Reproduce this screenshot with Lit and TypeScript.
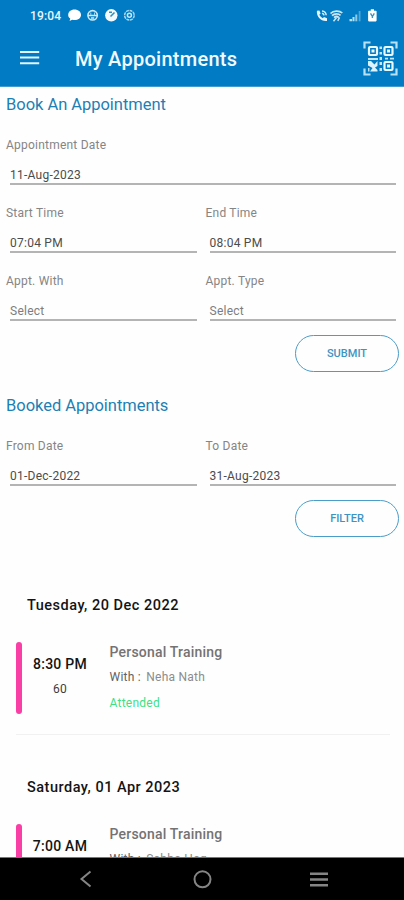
import { LitElement, html, css, svg } from "lit";
import { customElement, property } from "lit/decorators.js";

interface Appointment {
  date: string;
  time: string;
  minutes: string;
  title: string;
  trainer: string;
  status: string;
}

const APPOINTMENTS: Appointment[] = [
  { date: "Tuesday, 20 Dec 2022", time: "8:30 PM", minutes: "60", title: "Personal Training", trainer: "Neha Nath", status: "Attended" },
  { date: "Saturday, 01 Apr 2023", time: "7:00 AM", minutes: "", title: "Personal Training", trainer: "Sabba Haq", status: "" },
];

@customElement("status-bar")
class StatusBar extends LitElement {
  static styles = css`
    :host { display: flex; height: 31px; align-items: center; padding: 0 26px 0 30px; justify-content: space-between; box-sizing: border-box; color: #e9f6fc; }
    .time { font-size: 12px; font-weight: 500; letter-spacing: 0.15px; line-height: 16px; width: 38px; }
    .group { display: flex; align-items: center; }
    svg { display: block; }
  `;
  render() {
    return html`
      <div class="group">
        <span class="time">19:04</span>
        <svg width="70" height="16" viewBox="0 0 70 16">
          <path d="M6.500 1.500C10.200 1.500 13 3.800 13 6.900S10.200 12 6.500 12c-.8 0-1.600-.1-2.300-.3L1.600 13l.6-2.500C.8 9.500.2 8.300.2 6.900.2 3.800 2.800 1.500 6.500 1.500z" fill="#fff"/>
          <circle cx="24.600" cy="7.300" r="4.700" fill="none" stroke="#cdeafa" stroke-width="1.600"/>
          <path d="M20 7.500h9.200M23 10h3.200" stroke="#cdeafa" stroke-width="1.700"/>
          <path d="M22.800 4.500v2.500M26.500 4.500v2.500" stroke="#9fd2ec" stroke-width="1"/>
          <circle cx="43.300" cy="7.300" r="6.200" fill="#f4fbff"/>
          <path d="m42.500 8.600 4-4.200M41 4.300h3" stroke="#2f8fbb" stroke-width="1.500" fill="none"/>
          <circle cx="61.400" cy="7.300" r="4.800" fill="none" stroke="#a9d8ef" stroke-width="1.500" stroke-dasharray="3 .7"/>
          <circle cx="61.400" cy="7.300" r="2" fill="none" stroke="#c6e8f8" stroke-width="1.500"/>
        </svg>
      </div>
      <svg width="62" height="16" viewBox="0 0 62 16">
        <path d="M.9 2.700 3.400 2.400l1.200 3.100-1.300 1.300c.8 1.600 2 2.700 3.500 3.500L8 9.100l3 1.200v2.600C5.400 13.800.2 8.700.9 2.700z" fill="#e6f6fd"/>
        <path d="M6 3c2.300.2 4 1.800 4.200 4.200M6 5.200c1.100.2 1.900.9 2.100 2.100" fill="none" stroke="#d7effb" stroke-width="1.500"/>
        <path d="M14.500 5.500c3-3.200 9-3.200 11.800-.5M16 7.700c2.500-2.400 6.300-2.400 8.600-.3M18 9.600c1.500-1.300 3.500-1.300 4.800 0" fill="none" stroke="#c9e8f7" stroke-width="1.700"/>
        <path d="m20.500 9.500-3 3.700M23.500 9.300 21.800 12.800" stroke="#c9e8f7" stroke-width="1.500"/>
        <path d="M33.500 11h2.500v2.300h-2.500zM36.500 9h2v4.300h-2z" fill="#b8e0f3"/>
        <path d="M39.300 6.500h2v6.800h-2z" fill="#8ccbe8"/>
        <path d="M42.700 3h1.800v10.300h-1.800z" fill="#4fa9d6"/>
        <path d="M54.800 1.300H58v1.400h1.800c.5 0 .8.300.8.800v9.100c0 .5-.3.800-.8.800h-6.900c-.5 0-.8-.3-.8-.8V3.500c0-.5.300-.8.800-.8h1.900z" fill="#fff"/>
        <path d="M54.500 5.300 56.400 8.500l1.900-3.200M56.400 8v2" stroke="#3f92be" stroke-width="1.400" fill="none"/>
      </svg>
    `;
  }
}

@customElement("form-field")
class FormField extends LitElement {
  @property() label = "";
  @property() value = "";
  @property({ type: Boolean }) empty = false;
  static styles = css`
    :host { display: block; flex: 1; height: 68px; color: #4c4c4c; }
    .label { font-size: 12px; line-height: 16px; letter-spacing: 0.22px; color: #858585; }
    .value { margin: 14px 0 0 4px; height: 16px; font-size: 12px; line-height: 16px; letter-spacing: 0.25px; border-bottom: 2px solid #b4b4b4; }
    .empty { color: #7d7d7d; }
  `;
  render() {
    return html`<div class="label">${this.label}</div>
      <div class="value ${this.empty ? "empty" : ""}">${this.value}</div>`;
  }
}

@customElement("appointment-item")
class AppointmentItem extends LitElement {
  @property({ attribute: false }) item!: Appointment;
  static styles = css`
    :host { display: block; height: 182px; box-sizing: border-box; padding: 0 14px 0 16px; }
    .date { font-size: 14.500px; font-weight: 500; line-height: 20px; letter-spacing: 0.5px; color: #141414; margin-left: 11px; }
    .card { display: flex; height: 119px; box-sizing: border-box; padding-top: 26px; border-bottom: 1px solid #f1f1f1; }
    .bar { width: 6px; height: 72px; border-radius: 3px; background: #f93ea5; }
    .when { width: 76px; padding-top: 13px; text-align: center; }
    .time { font-size: 14px; font-weight: 500; line-height: 18px; letter-spacing: 0.25px; color: #141414; }
    .minutes { font-size: 12px; line-height: 16px; margin-top: 8px; letter-spacing: 0.2px; color: #3c3c3c; }
    .what { padding: 1px 0 0 11.500px; }
    .title { font-size: 14px; font-weight: 500; line-height: 18px; letter-spacing: 0.2px; color: #737373; }
    .with { font-size: 12px; line-height: 16px; margin-top: 8px; color: #8c8c8c; letter-spacing: 0.25px; }
    .key { color: #626262; margin-right: 2px; }
    .status { font-size: 12px; line-height: 16px; margin-top: 10px; color: #40df86; letter-spacing: 0.25px; }
  `;
  render() {
    const a = this.item;
    return html`
      <div class="date">${a.date}</div>
      <div class="card">
        <div class="bar"></div>
        <div class="when">
          <div class="time">${a.time}</div>
          <div class="minutes">${a.minutes}</div>
        </div>
        <div class="what">
          <div class="title">${a.title}</div>
          <div class="with"><span class="key">With :</span> ${a.trainer}</div>
          <div class="status">${a.status}</div>
        </div>
      </div>
    `;
  }
}

const finder = (x: number, y: number) => svg`
  <rect x=${x} y=${y} width="8" height="8" rx="1" fill="none" stroke="#eaf7fd" stroke-width="2.200"/>
  <rect x=${x + 2.5} y=${y + 2.5} width="3" height="3" fill="#eaf7fd"/>`;

@customElement("app-root")
class AppRoot extends LitElement {
  static styles = css`
    :host { display: flex; flex-direction: column; width: 404px; height: 900px; overflow: hidden; background: #fefefe; font-family: Roboto, "Liberation Sans", sans-serif; }
    .header { flex: none; height: 87px; box-sizing: border-box; background: #017bc3; border-bottom: 1px solid #3f9bd0; }
    .bar { display: flex; height: 54px; align-items: center; padding: 0 6px 0 20px; }
    .burger { width: 20px; }
    .title { flex: 1; margin: 2px 0 0 35px; font-size: 20px; font-weight: 500; line-height: 26px; color: #f1fafe; letter-spacing: 0.27px; }
    svg { display: block; }
    .body { flex: 1; min-height: 0; overflow: hidden; padding-top: 8px; }
    .section { padding: 0 5px 0 6px; }
    h2 { margin: 0 0 22px; font-size: 16.500px; line-height: 20px; font-weight: 400; letter-spacing: -0.03px; color: #1d80b4; }
    .row { display: flex; gap: 9px; padding-right: 3px; }
    .actions { display: flex; justify-content: flex-end; height: 61px; margin-top: -6px; }
    button { width: 104px; height: 37px; box-sizing: border-box; padding: 0; border: 1.500px solid #4b9dc9; border-radius: 19px; background: none; font: 500 11px/16px Roboto, sans-serif; color: #3d93c2; letter-spacing: 0; }
    .list { padding-top: 35px; }
    .nav { flex: none; height: 43px; box-sizing: border-box; background: #000; border-top: 1px solid #777; }
  `;
  render() {
    return html`
      <div class="header">
        <status-bar></status-bar>
        <div class="bar">
          <svg class="burger" width="20" height="16" viewBox="0 0 20 16">
            <path d="M0 2h19.200M0 7.600h19.200M0 13.200h19.200" stroke="#e3f4fc" stroke-width="2"/>
          </svg>
          <div class="title">My Appointments</div>
          <svg width="35" height="35" viewBox="0 0 35 35">
            <path d="M1.500 7.500v-6h6M27.500 1.500h6v6M33.500 27.500v6h-6M7.500 33.500h-6v-6" fill="none" stroke="#b9e1f5" stroke-width="2.200"/>
            ${finder(6, 6)}${finder(21.5, 6)}${finder(21.5, 21)}
            <path d="M16.500 5.500h2.500v2.500h-2.500zM16.500 11h2.500v2.500h-2.500zM5 17h10v2H5zM16.500 16h2.500v3h-2.500zM22 16.800h3v1.800h-3zM27 16.800h4v1.800h-4zM16.500 21h2.500v3h-2.500zM16.500 27h2.500v3h-2.500z" fill="#c4e6f6"/>
            <path d="M5 20h3l3.500 3.500L14.500 20v5l-2.500 1.500L14.500 29v1.500H7L9.500 27 5 24.500z" fill="#def2fc"/>
            <path d="M5 27h1.500v3.500H5z" fill="#b9e1f5"/>
          </svg>
        </div>
      </div>
      <div class="body">
        <div class="section">
          <h2>Book An Appointment</h2>
          <div class="row"><form-field label="Appointment Date" value="11-Aug-2023"></form-field></div>
          <div class="row">
            <form-field label="Start Time" value="07:04 PM"></form-field>
            <form-field label="End Time" value="08:04 PM"></form-field>
          </div>
          <div class="row">
            <form-field label="Appt. With" value="Select" empty></form-field>
            <form-field label="Appt. Type" value="Select" empty></form-field>
          </div>
          <div class="actions"><button>SUBMIT</button></div>
        </div>
        <div class="section">
          <h2>Booked Appointments</h2>
          <div class="row">
            <form-field label="From Date" value="01-Dec-2022"></form-field>
            <form-field label="To Date" value="31-Aug-2023"></form-field>
          </div>
          <div class="actions"><button>FILTER</button></div>
        </div>
        <div class="list">
          ${APPOINTMENTS.map((a) => html`<appointment-item .item=${a}></appointment-item>`)}
        </div>
      </div>
      <div class="nav">
        <svg width="404" height="42" viewBox="0 0 404 42">
          <path d="M90.500 13.500 81.500 21l9 7.500" fill="none" stroke="#858585" stroke-width="2"/>
          <circle cx="202.500" cy="21.300" r="8" fill="none" stroke="#858585" stroke-width="2"/>
          <path d="M310 15.800h18M310 21.500h18M310 27.200h18" stroke="#858585" stroke-width="2.500"/>
        </svg>
      </div>
    `;
  }
}
